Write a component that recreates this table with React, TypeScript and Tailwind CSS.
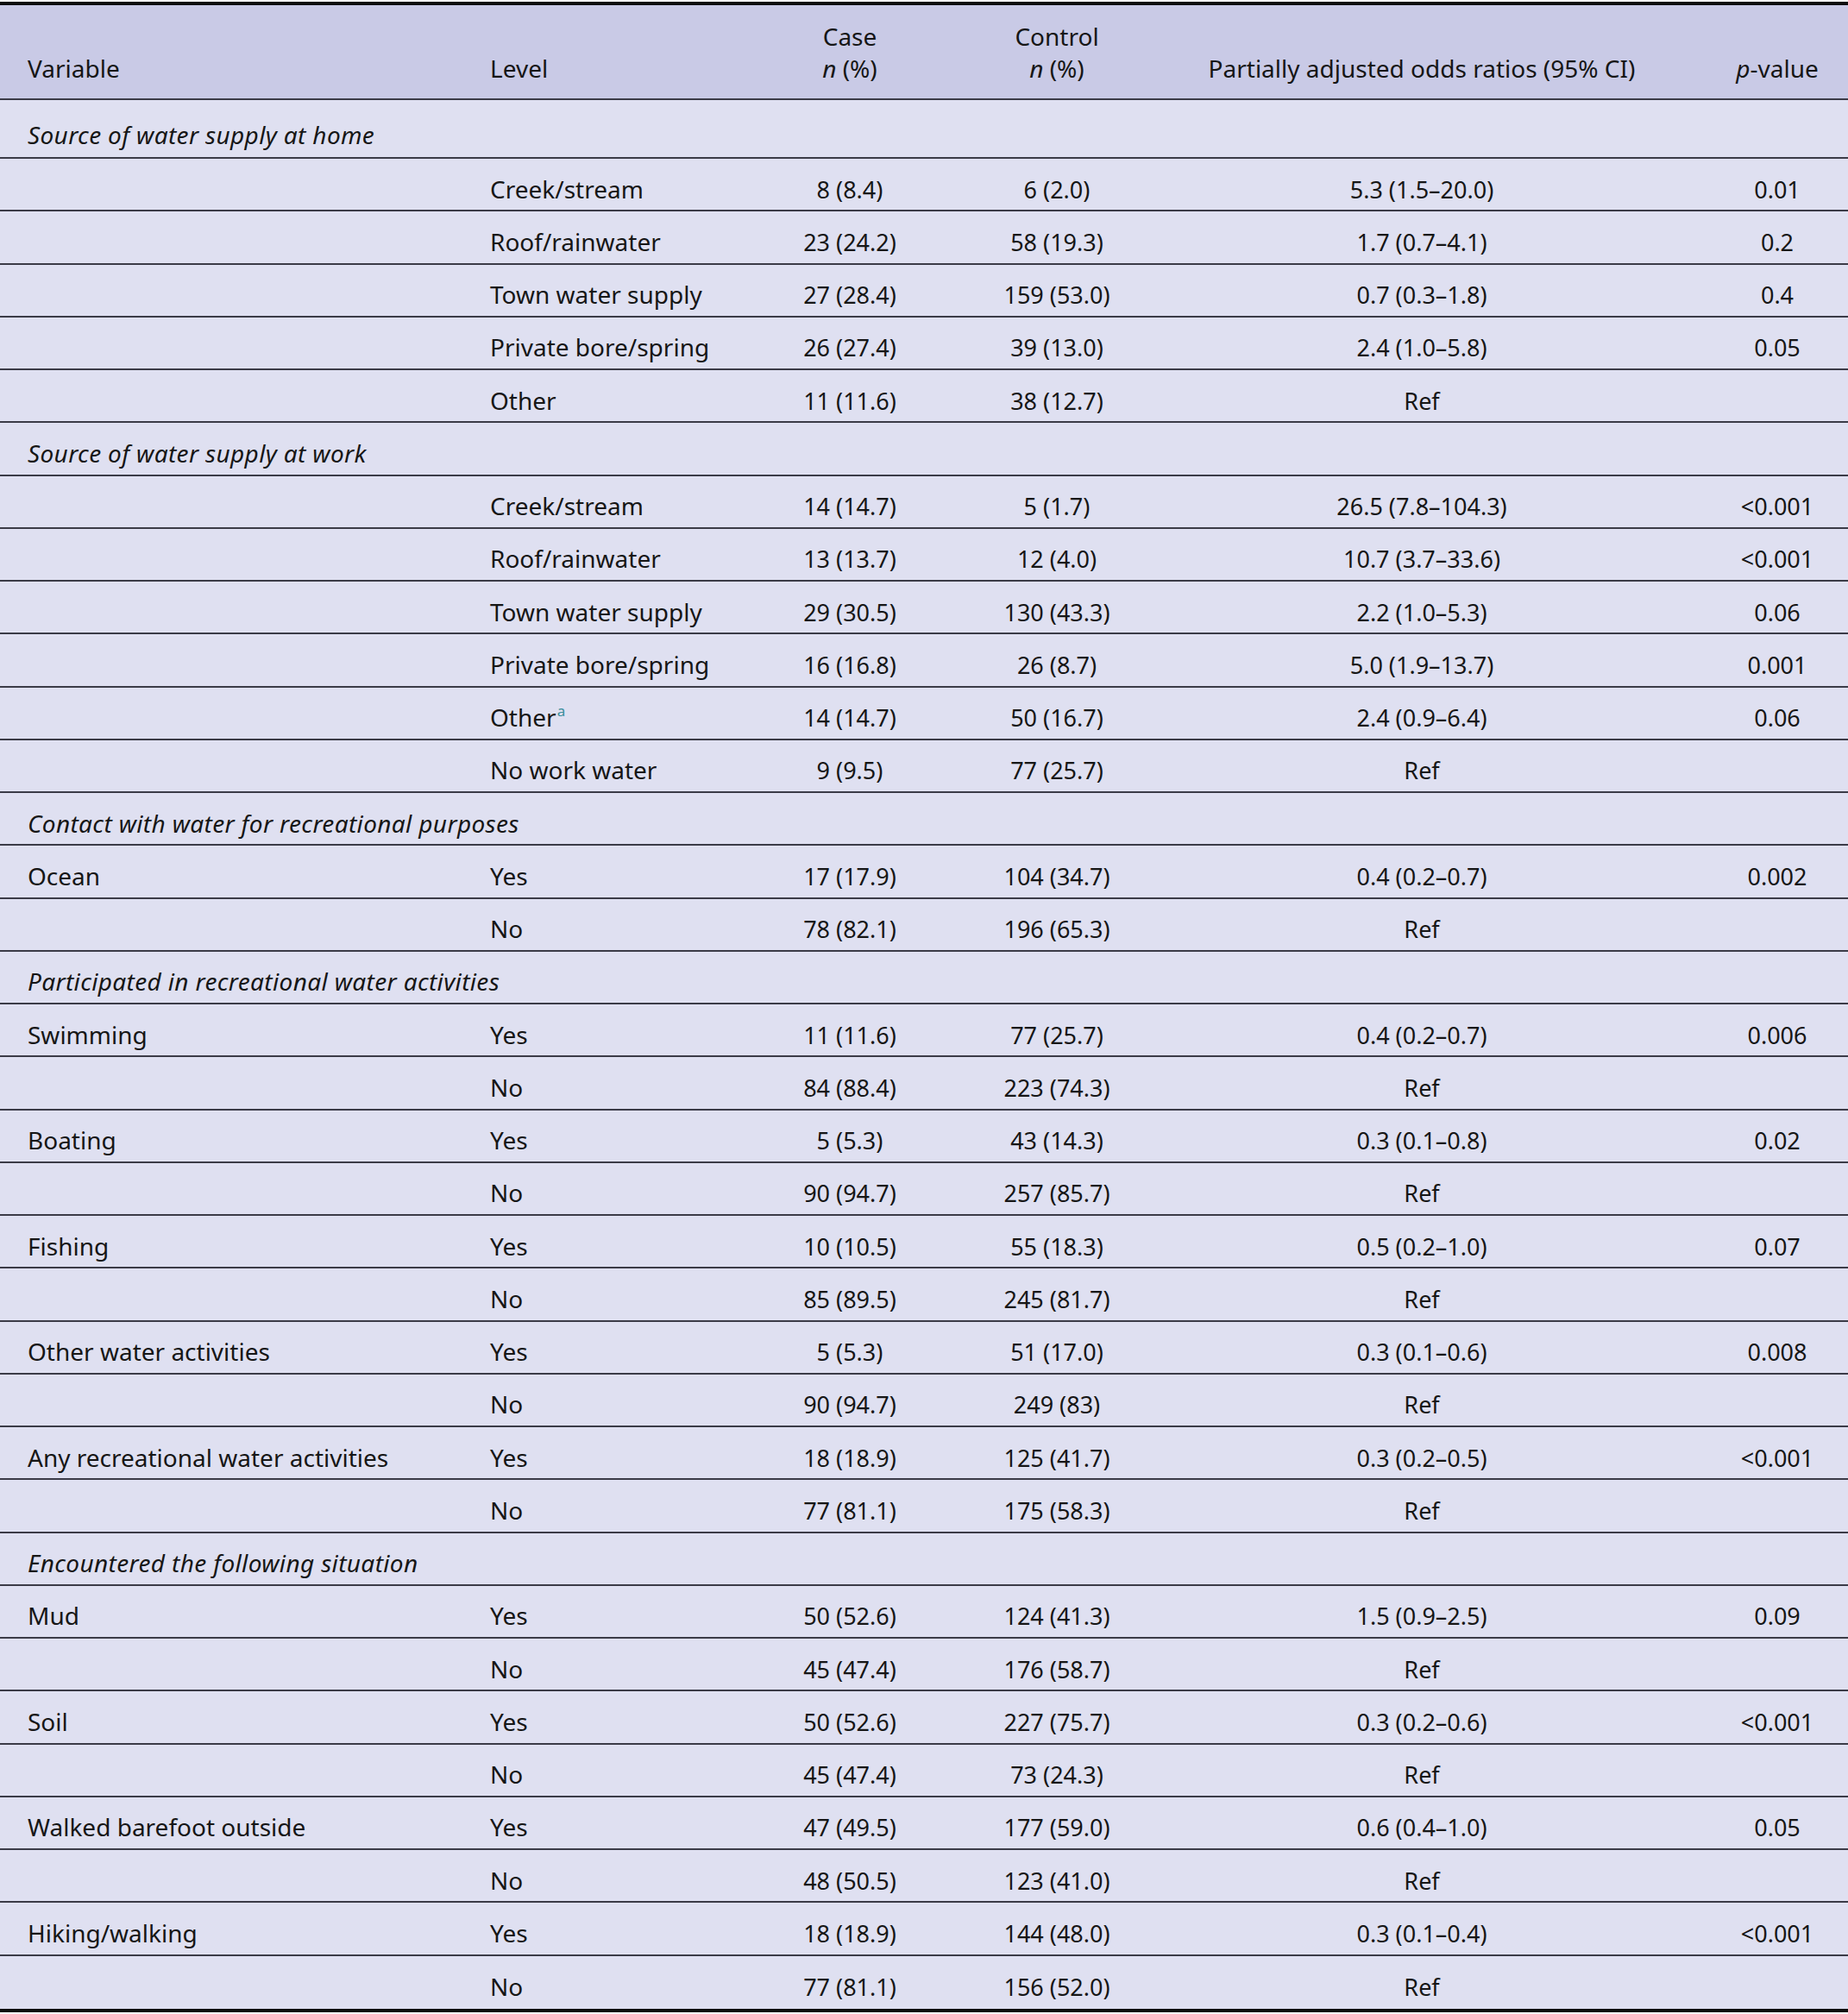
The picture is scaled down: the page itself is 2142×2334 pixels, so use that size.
import React from "react";

type Row =
  | { kind: "section"; title: string }
  | { kind: "data"; variable?: string; level: string; sup?: string; c: string; k: string; or: string; p?: string };

const rows: Row[] = [
  { kind: "section", title: "Source of water supply at home" },
  { kind: "data", level: "Creek/stream", c: "8 (8.4)", k: "6 (2.0)", or: "5.3 (1.5–20.0)", p: "0.01" },
  { kind: "data", level: "Roof/rainwater", c: "23 (24.2)", k: "58 (19.3)", or: "1.7 (0.7–4.1)", p: "0.2" },
  { kind: "data", level: "Town water supply", c: "27 (28.4)", k: "159 (53.0)", or: "0.7 (0.3–1.8)", p: "0.4" },
  { kind: "data", level: "Private bore/spring", c: "26 (27.4)", k: "39 (13.0)", or: "2.4 (1.0–5.8)", p: "0.05" },
  { kind: "data", level: "Other", c: "11 (11.6)", k: "38 (12.7)", or: "Ref" },
  { kind: "section", title: "Source of water supply at work" },
  { kind: "data", level: "Creek/stream", c: "14 (14.7)", k: "5 (1.7)", or: "26.5 (7.8–104.3)", p: "<0.001" },
  { kind: "data", level: "Roof/rainwater", c: "13 (13.7)", k: "12 (4.0)", or: "10.7 (3.7–33.6)", p: "<0.001" },
  { kind: "data", level: "Town water supply", c: "29 (30.5)", k: "130 (43.3)", or: "2.2 (1.0–5.3)", p: "0.06" },
  { kind: "data", level: "Private bore/spring", c: "16 (16.8)", k: "26 (8.7)", or: "5.0 (1.9–13.7)", p: "0.001" },
  { kind: "data", level: "Other", sup: "a", c: "14 (14.7)", k: "50 (16.7)", or: "2.4 (0.9–6.4)", p: "0.06" },
  { kind: "data", level: "No work water", c: "9 (9.5)", k: "77 (25.7)", or: "Ref" },
  { kind: "section", title: "Contact with water for recreational purposes" },
  { kind: "data", variable: "Ocean", level: "Yes", c: "17 (17.9)", k: "104 (34.7)", or: "0.4 (0.2–0.7)", p: "0.002" },
  { kind: "data", level: "No", c: "78 (82.1)", k: "196 (65.3)", or: "Ref" },
  { kind: "section", title: "Participated in recreational water activities" },
  { kind: "data", variable: "Swimming", level: "Yes", c: "11 (11.6)", k: "77 (25.7)", or: "0.4 (0.2–0.7)", p: "0.006" },
  { kind: "data", level: "No", c: "84 (88.4)", k: "223 (74.3)", or: "Ref" },
  { kind: "data", variable: "Boating", level: "Yes", c: "5 (5.3)", k: "43 (14.3)", or: "0.3 (0.1–0.8)", p: "0.02" },
  { kind: "data", level: "No", c: "90 (94.7)", k: "257 (85.7)", or: "Ref" },
  { kind: "data", variable: "Fishing", level: "Yes", c: "10 (10.5)", k: "55 (18.3)", or: "0.5 (0.2–1.0)", p: "0.07" },
  { kind: "data", level: "No", c: "85 (89.5)", k: "245 (81.7)", or: "Ref" },
  { kind: "data", variable: "Other water activities", level: "Yes", c: "5 (5.3)", k: "51 (17.0)", or: "0.3 (0.1–0.6)", p: "0.008" },
  { kind: "data", level: "No", c: "90 (94.7)", k: "249 (83)", or: "Ref" },
  { kind: "data", variable: "Any recreational water activities", level: "Yes", c: "18 (18.9)", k: "125 (41.7)", or: "0.3 (0.2–0.5)", p: "<0.001" },
  { kind: "data", level: "No", c: "77 (81.1)", k: "175 (58.3)", or: "Ref" },
  { kind: "section", title: "Encountered the following situation" },
  { kind: "data", variable: "Mud", level: "Yes", c: "50 (52.6)", k: "124 (41.3)", or: "1.5 (0.9–2.5)", p: "0.09" },
  { kind: "data", level: "No", c: "45 (47.4)", k: "176 (58.7)", or: "Ref" },
  { kind: "data", variable: "Soil", level: "Yes", c: "50 (52.6)", k: "227 (75.7)", or: "0.3 (0.2–0.6)", p: "<0.001" },
  { kind: "data", level: "No", c: "45 (47.4)", k: "73 (24.3)", or: "Ref" },
  { kind: "data", variable: "Walked barefoot outside", level: "Yes", c: "47 (49.5)", k: "177 (59.0)", or: "0.6 (0.4–1.0)", p: "0.05" },
  { kind: "data", level: "No", c: "48 (50.5)", k: "123 (41.0)", or: "Ref" },
  { kind: "data", variable: "Hiking/walking", level: "Yes", c: "18 (18.9)", k: "144 (48.0)", or: "0.3 (0.1–0.4)", p: "<0.001" },
  { kind: "data", level: "No", c: "77 (81.1)", k: "156 (52.0)", or: "Ref" },
];

const grid = "grid grid-cols-[555px_283px_294px_186px_660px_164px]";

export default function App() {
  return (
    <div
      className="w-[2142px] bg-white pt-[2px] text-[27px] leading-[37px] text-[#161616]"
      style={{ fontFamily: '"Noto Sans", "Open Sans", sans-serif' }}
    >
      <div className={`${grid} h-[114px] border-t-[4px] border-b-2 border-t-[#0d0d0d] border-b-[#3b3b47] bg-[#c9cae6] items-end pb-[16px] text-[28px]`}>
        <div className="pl-[32px]">Variable</div>
        <div className="pl-[13px]">Level</div>
        <div className="flex flex-col items-center">
          <span>Case</span>
          <span>
            <i>n</i> (%)
          </span>
        </div>
        <div className="flex flex-col items-center">
          <span>Control</span>
          <span>
            <i>n</i> (%)
          </span>
        </div>
        <div className="text-center">Partially adjusted odds ratios (95% CI)</div>
        <div className="text-center">
          <i>p</i>-value
        </div>
      </div>
      <div className="bg-[#dfe0f1]">
        {rows.map((r, i) => {
          const last = i === rows.length - 1;
          const first = i === 0;
          const border = last
            ? "h-[65.26px] pt-[11px] border-b-[4px] border-b-[#0d0d0d]"
            : first
            ? "h-[68px] pt-[14px] border-b-2 border-b-[#3b3b47]"
            : "h-[61.26px] pt-[11px] border-b-2 border-b-[#3b3b47]";
          if (r.kind === "section") {
            return (
              <div key={i} className={`flex items-center ${border}`}>
                <i className="pl-[32px] text-[28px] tracking-[0.35px]">{r.title}</i>
              </div>
            );
          }
          return (
            <div key={i} className={`${grid} items-center ${border}`}>
              <div className="pl-[32px] text-[28px]">{r.variable ?? ""}</div>
              <div className="pl-[13px] text-[28px]">
                {r.level}
                {r.sup && (
                  <span className="ml-[1px] align-top text-[17px] leading-[17px] text-[#3b8f9c] relative top-[2px]">
                    {r.sup}
                  </span>
                )}
              </div>
              <div className="text-center">{r.c}</div>
              <div className="text-center">{r.k}</div>
              <div className="text-center">{r.or}</div>
              <div className="text-center">{r.p ?? ""}</div>
            </div>
          );
        })}
      </div>
    </div>
  );
}
